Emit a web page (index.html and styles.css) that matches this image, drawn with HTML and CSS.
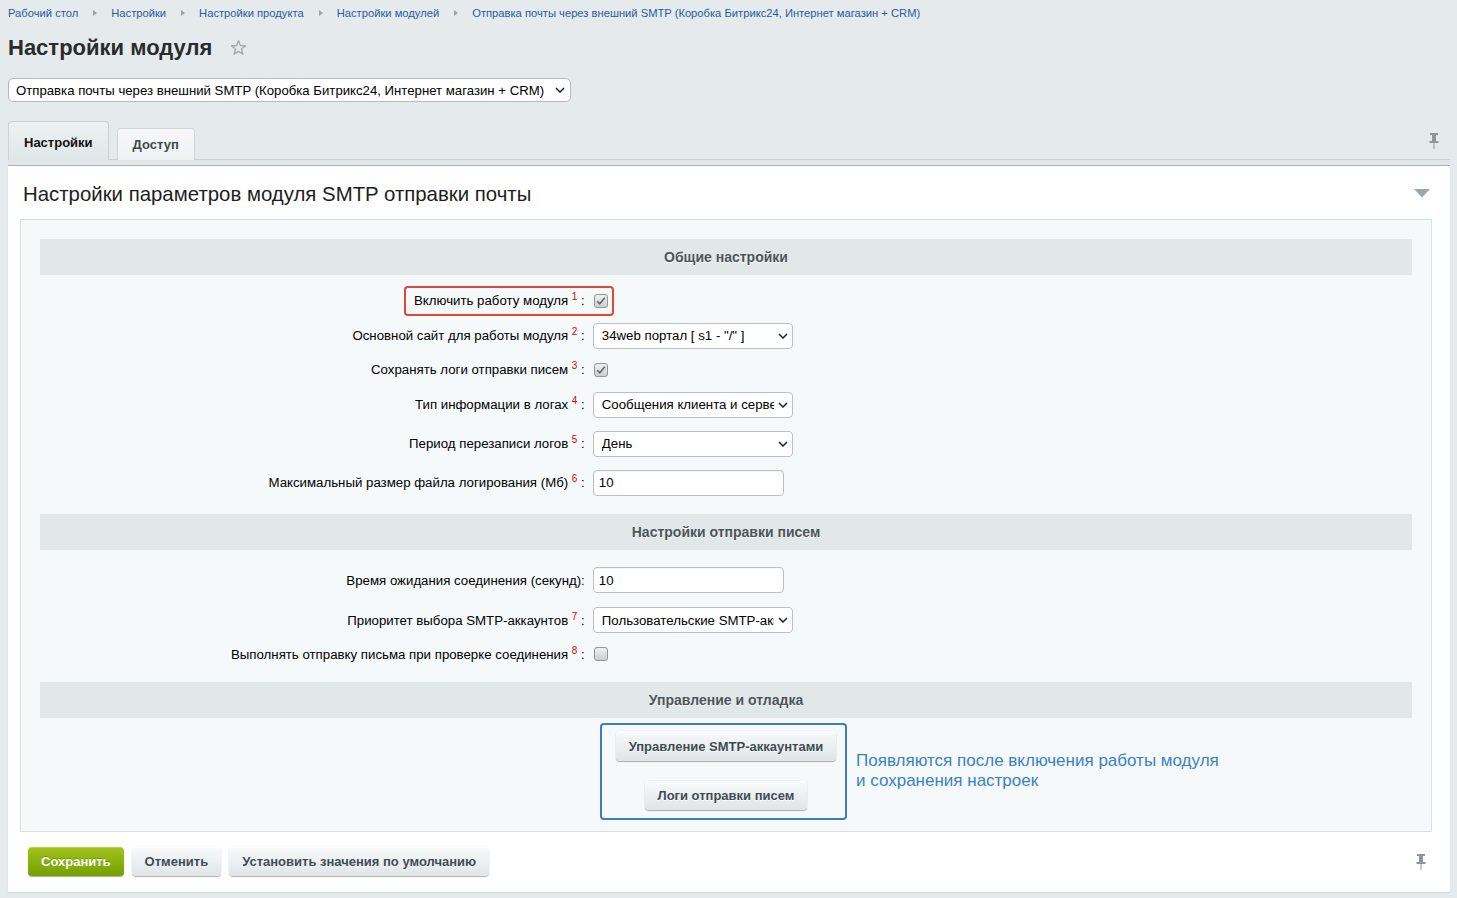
FILE: index.html
```html
<!DOCTYPE html>
<html lang="ru">
<head>
<meta charset="utf-8">
<title>Настройки модуля</title>
<link rel="stylesheet" href="styles.css">
</head>
<body>
<div class="page">
  <nav class="crumbs">
    <a class="crumb">Рабочий стол</a><span class="crumb-arrow"></span>
    <a class="crumb">Настройки</a><span class="crumb-arrow"></span>
    <a class="crumb">Настройки продукта</a><span class="crumb-arrow"></span>
    <a class="crumb">Настройки модулей</a><span class="crumb-arrow"></span>
    <a class="crumb">Отправка почты через внешний SMTP (Коробка Битрикс24, Интернет магазин + CRM)</a>
  </nav>

  <div class="title-row">
    <h1 class="title">Настройки модуля</h1>
    <svg class="star" width="17" height="16" viewBox="0 0 17 16"><polygon points="8.5,0.8 10.4,5.5 15.6,5.8 11.5,9 12.9,14.2 8.5,11.3 4.1,14.2 5.5,9 1.4,5.8 6.6,5.5" fill="none" stroke="#a1abb0" stroke-width="1.4" stroke-linejoin="round"/></svg>
  </div>

  <div class="module-select">
    <span>Отправка почты через внешний SMTP (Коробка Битрикс24, Интернет магазин + CRM)</span>
    <svg class="chev" width="10" height="6" viewBox="0 0 10 6"><path d="M1 1 L5 5 L9 1" fill="none" stroke="#222" stroke-width="1.5"/></svg>
  </div>

  <div class="tabs">
    <div class="tab tab-active">Настройки</div>
    <div class="tab">Доступ</div>
    <svg class="pin pin-top" width="10" height="16" viewBox="0 0 10 16"><rect x="1" y="0" width="8" height="2" fill="#8c969b"/><rect x="3" y="2" width="4" height="6" fill="#8c969b"/><rect x="0.5" y="8" width="9" height="2" fill="#8c969b"/><rect x="4.5" y="10" width="1" height="6" fill="#8c969b"/></svg>
  </div>
  <div class="tab-band"></div>

  <div class="panel">
    <div class="panel-head">
      <h2 class="panel-title">Настройки параметров модуля SMTP отправки почты</h2>
      <svg class="collapse" width="16" height="9" viewBox="0 0 16 9"><polygon points="0,0 16,0 8,8.5" fill="#9ea7ac"/></svg>
    </div>

    <div class="inner">
      <div class="sec-head">Общие настройки</div>
      <div class="rows rows-general">
        <div class="row row-a">
          <div class="lbl">Включить работу модуля <sup>1</sup> :</div>
          <div class="fld"><span class="cb"><svg width="14" height="14" viewBox="0 0 14 14"><path d="M3.2 7.2 L5.8 9.8 L10.8 3.8" fill="none" stroke="#5e676c" stroke-width="1.6"/></svg></span></div>
          <div class="hl-red"></div>
        </div>
        <div class="row row-b">
          <div class="lbl">Основной сайт для работы модуля <sup>2</sup> :</div>
          <div class="fld"><div class="sel"><span>34web портал [ s1 - "/" ]</span><svg class="chev" width="10" height="6" viewBox="0 0 10 6"><path d="M1 1 L5 5 L9 1" fill="none" stroke="#222" stroke-width="1.5"/></svg></div></div>
        </div>
        <div class="row row-c">
          <div class="lbl">Сохранять логи отправки писем <sup>3</sup> :</div>
          <div class="fld"><span class="cb"><svg width="14" height="14" viewBox="0 0 14 14"><path d="M3.2 7.2 L5.8 9.8 L10.8 3.8" fill="none" stroke="#5e676c" stroke-width="1.6"/></svg></span></div>
        </div>
        <div class="row">
          <div class="lbl">Тип информации в логах <sup>4</sup> :</div>
          <div class="fld"><div class="sel"><span>Сообщения клиента и сервера</span><svg class="chev" width="10" height="6" viewBox="0 0 10 6"><path d="M1 1 L5 5 L9 1" fill="none" stroke="#222" stroke-width="1.5"/></svg></div></div>
        </div>
        <div class="row">
          <div class="lbl">Период перезаписи логов <sup>5</sup> :</div>
          <div class="fld"><div class="sel"><span>День</span><svg class="chev" width="10" height="6" viewBox="0 0 10 6"><path d="M1 1 L5 5 L9 1" fill="none" stroke="#222" stroke-width="1.5"/></svg></div></div>
        </div>
        <div class="row">
          <div class="lbl">Максимальный размер файла логирования (Мб) <sup>6</sup> :</div>
          <div class="fld"><input class="txt" type="text" value="10"></div>
        </div>
      </div>

      <div class="sec-head">Настройки отправки писем</div>
      <div class="rows rows-send">
        <div class="row row-d">
          <div class="lbl">Время ожидания соединения (секунд):</div>
          <div class="fld"><input class="txt" type="text" value="10"></div>
        </div>
        <div class="row row-d">
          <div class="lbl">Приоритет выбора SMTP-аккаунтов <sup>7</sup> :</div>
          <div class="fld"><div class="sel"><span>Пользовательские SMTP-аккаунты</span><svg class="chev" width="10" height="6" viewBox="0 0 10 6"><path d="M1 1 L5 5 L9 1" fill="none" stroke="#222" stroke-width="1.5"/></svg></div></div>
        </div>
        <div class="row row-e">
          <div class="lbl">Выполнять отправку письма при проверке соединения <sup>8</sup> :</div>
          <div class="fld"><span class="cb"></span></div>
        </div>
      </div>

      <div class="sec-head">Управление и отладка</div>
      <div class="actions">
        <button class="btn btn-accounts">Управление SMTP-аккаунтами</button>
        <button class="btn">Логи отправки писем</button>
        <div class="hl-blue"></div>
        <div class="note">Появляются после включения работы модуля<br>и сохранения настроек</div>
      </div>
    </div>

    <div class="footer">
      <button class="btn btn-save">Сохранить</button>
      <button class="btn">Отменить</button>
      <button class="btn">Установить значения по умолчанию</button>
      <svg class="pin pin-bottom" width="10" height="16" viewBox="0 0 10 16"><rect x="1" y="0" width="8" height="2" fill="#8c969b"/><rect x="3" y="2" width="4" height="6" fill="#8c969b"/><rect x="0.5" y="8" width="9" height="2" fill="#8c969b"/><rect x="4.5" y="10" width="1" height="6" fill="#8c969b"/></svg>
    </div>
  </div>
</div>
</body>
</html>
```

FILE: styles.css
```css
* { box-sizing: border-box; }
html, body { margin: 0; padding: 0; }
body {
  background: #e5ebed;
  font-family: "Liberation Sans", Arial, sans-serif;
  color: #000;
  width: 1457px;
  height: 898px;
  overflow: hidden;
}
.page { padding: 0 7px 0 8px; }

/* breadcrumbs */
.crumbs {
  display: flex;
  align-items: center;
  height: 26px;
  font-size: 11.2px;
  line-height: 14px;
  color: #2a5a9c;
}
.crumb { color: #2a5a9c; text-decoration: none; white-space: nowrap; }
.crumb-arrow {
  width: 0; height: 0;
  border-left: 4px solid #9aa3a8;
  border-top: 3.5px solid transparent;
  border-bottom: 3.5px solid transparent;
  margin: 0 14px 0 15px;
}

/* title */
.title-row {
  display: flex;
  align-items: center;
  height: 28px;
  margin-top: 8px;
}
.title {
  margin: 0;
  font-size: 22px;
  line-height: 28px;
  font-weight: bold;
  color: #2b2b2b;
}
.star { margin-left: 18px; margin-top: -1px; }

/* module select */
.module-select {
  margin-top: 16px;
  width: 563px;
  height: 24px;
  background: #fff;
  border: 1px solid #b4babe;
  border-radius: 5px;
  display: flex;
  align-items: center;
  justify-content: space-between;
  padding: 0 5px 0 7px;
  font-size: 13.2px;
  color: #000;
}

/* tabs */
.tabs {
  margin-top: 19px;
  height: 39px;
  display: flex;
  align-items: flex-end;
  gap: 8px;
  border-bottom: 1px solid #c9d2d5;
}
.tab {
  height: 32px;
  margin-bottom: -1px;
  padding: 0 15px;
  display: flex;
  align-items: center;
  font-size: 13px;
  font-weight: bold;
  color: #3f484c;
  background: linear-gradient(#f6f8f9, #eef2f3);
  border: 1px solid #cdd5d8;
  border-bottom: none;
  border-radius: 4px 4px 0 0;
}
.tab-active {
  height: 39px;
  padding-top: 3px;
  color: #111;
  background: linear-gradient(#edf1f2, #e0e7e9);
  border-color: #c8d1d4;
}
.pin-top { margin-left: auto; margin-right: 11px; align-self: flex-start; margin-top: 12px; }

.tab-band {
  height: 6px;
  background: #e0e7e9;
  border-bottom: 1px solid #a8b1b5;
}

/* panel */
.panel {
  background: #fff;
  padding: 0 18px 16px 12px;
  box-shadow: 0 1px 1px rgba(0, 0, 0, 0.08);
}
.panel-head {
  height: 53px;
  padding: 3px 2px 0 3px;
  display: flex;
  align-items: center;
  justify-content: space-between;
}
.panel-title {
  margin: 0;
  font-size: 20.4px;
  line-height: 24px;
  font-weight: normal;
  color: #1d1d1d;
}
.collapse { margin-top: -2px; }

.inner {
  background: #f5f9f9;
  border: 1px solid #d6e0e3;
  padding: 19px 19px 19px;
}
.sec-head {
  height: 36px;
  line-height: 36px;
  background: #e0e8ea;
  text-align: center;
  font-size: 14px;
  font-weight: bold;
  color: #4b5559;
  text-shadow: 0 1px #fff;
}
.rows-general { padding: 9px 0 12px; }
.rows-send { padding: 10px 0 14px; }

.row {
  position: relative;
  display: flex;
  align-items: center;
  height: 39px;
  font-size: 13.25px;
}
.row-a { height: 33px; }
.row-b { height: 37px; }
.row-c { height: 31px; }
.row-d { height: 40px; }
.row-e { height: 28px; }

.lbl {
  flex: 0 0 40%;
  text-align: right;
  padding-right: 4px;
  color: #000;
  white-space: nowrap;
}
.lbl sup {
  color: #e60000;
  font-size: 10px;
  line-height: 0;
  vertical-align: 5px;
}
.fld {
  flex: 1;
  padding-left: 4px;
  display: flex;
  align-items: center;
}

.cb {
  width: 14px;
  height: 14px;
  margin-left: 1px;
  border: 1px solid #8f979b;
  border-radius: 3px;
  background: linear-gradient(#eef0f1, #c9cfd2);
  display: flex;
  align-items: center;
  justify-content: center;
  overflow: hidden;
}
.cb svg { flex: none; }

.sel {
  width: 200px;
  height: 26px;
  border: 1px solid #b9bfc3;
  border-radius: 4px;
  background: #fff;
  display: flex;
  align-items: center;
  padding: 0 4px 0 8px;
  font-size: 13.25px;
  color: #000;
}
.sel span {
  flex: 1;
  overflow: hidden;
  white-space: nowrap;
}
.sel .chev { flex: none; margin-left: 4px; }

.txt {
  width: 191px;
  height: 26px;
  border: 1px solid #b9bfc3;
  border-radius: 4px;
  background: #fff;
  padding: 0 5px;
  font-family: "Liberation Sans", Arial, sans-serif;
  font-size: 13.25px;
  color: #000;
  box-shadow: inset 0 1px 1px rgba(0, 0, 0, 0.04);
  outline: none;
}

/* annotations */
.hl-red {
  position: absolute;
  left: 364px;
  top: 2px;
  width: 210px;
  height: 30px;
  border: 2px solid #e2453c;
  border-radius: 4px;
}
.actions {
  position: relative;
  display: flex;
  flex-direction: column;
  align-items: center;
  gap: 20px;
  padding: 13px 0 2px;
}
.hl-blue {
  position: absolute;
  left: 560px;
  top: 5px;
  width: 247px;
  height: 97px;
  border: 2px solid #3d7cc2;
  border-radius: 4px;
}
.note {
  position: absolute;
  left: 816px;
  top: 33px;
  font-size: 17px;
  line-height: 20px;
  color: #3a82c8;
  white-space: nowrap;
}

/* buttons */
.btn {
  height: 29px;
  padding: 0 13px;
  border: none;
  border-radius: 4px;
  background: linear-gradient(#f8fafb, #dfe5e7);
  box-shadow: 0 0 1px rgba(0, 0, 0, 0.2), 0 1px 1px rgba(0, 0, 0, 0.3), inset 0 1px #fff;
  font-family: "Liberation Sans", Arial, sans-serif;
  font-size: 13px;
  font-weight: bold;
  color: #3f4b54;
  text-shadow: 0 1px rgba(255, 255, 255, 0.7);
  display: inline-flex;
  align-items: center;
  justify-content: center;
  white-space: nowrap;
}
.btn-accounts { height: 30px; }
.btn-save {
  background: linear-gradient(#a3c31a, #74a000);
  color: #fff;
  text-shadow: 0 -1px rgba(0, 0, 0, 0.2);
  box-shadow: 0 1px 1px rgba(0, 0, 0, 0.35), inset 0 1px rgba(255, 255, 255, 0.25);
}

.footer {
  margin-top: 15px;
  padding-left: 8px;
  display: flex;
  align-items: center;
  gap: 8px;
}
.pin-bottom { margin-left: auto; margin-right: 6px; }
```
